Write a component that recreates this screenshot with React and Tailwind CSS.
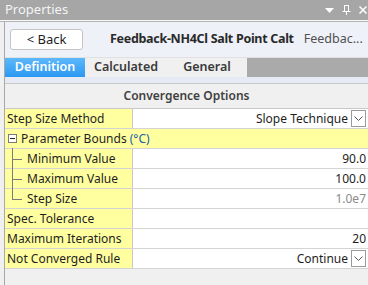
import React from 'react'

const font = { fontFamily: '"Noto Sans", "Open Sans", sans-serif' }

function Dropdown() {
  return (
    <div className="ml-[3px] flex h-[17px] w-[15px] items-center justify-center border border-[#9a9a9a] bg-white">
      <svg width="9" height="6" viewBox="0 0 9 6">
        <path d="M0.5 0.5 L4.5 4.5 L8.5 0.5" fill="none" stroke="#555" strokeWidth="1" />
      </svg>
    </div>
  )
}

function Row({ label, value, child, last, gray, dropdown }) {
  return (
    <div className="flex h-[20px] border-b border-[#d4d4d4] text-[12px]">
      <div className="relative flex w-[128px] shrink-0 items-center border-r border-[#c8c8c8] bg-[#ffffa0] text-[#1e1e1e]">
        {child && (
          <>
            <div className={`absolute left-[7px] top-[-1px] w-px bg-[#7a7a7a] ${last ? 'h-[11px]' : 'h-[21px]'}`} />
            <div className="absolute left-[7px] top-[10px] h-px w-[10px] bg-[#7a7a7a]" />
          </>
        )}
        <span className={child ? 'pl-[22px]' : 'pl-[2px]'}>{label}</span>
      </div>
      <div className={`flex flex-1 items-center justify-end bg-white pr-[2px] ${gray ? 'text-[#8a8a8a]' : 'text-[#1e1e1e]'}`}>
        <span>{value}</span>
        {dropdown && <Dropdown />}
      </div>
    </div>
  )
}

export default function App() {
  return (
    <div className="flex h-[285px] w-[368px] flex-col overflow-hidden bg-[#f0f0f0]" style={font}>
      {/* title bar */}
      <div className="flex h-[20px] shrink-0 items-center justify-between bg-[#a6a6a6] pl-[5px] text-[13px] text-[#f4f4f4]">
        <span>Properties</span>
        <div className="flex items-center gap-[8px] pr-[1px]">
          <svg width="9" height="5" viewBox="0 0 9 5"><path d="M0 0 H9 L4.5 5 Z" fill="#fff" /></svg>
          <svg width="9" height="10" viewBox="0 0 9 10">
            <path d="M2 0.5 H7 M2.5 0.5 V6 M6.5 0.5 V6 M0.5 6.5 H8.5 M4.5 6.5 V10" stroke="#fff" strokeWidth="1" fill="none" />
          </svg>
          <svg width="8" height="8" viewBox="0 0 8 8"><path d="M0.5 0.5 L7.5 7.5 M7.5 0.5 L0.5 7.5" stroke="#fff" strokeWidth="1.5" /></svg>
        </div>
      </div>
      <div className="h-px shrink-0 bg-[#f8f8f8]" />
      <div className="h-px shrink-0 bg-[#b4b4b4]" />

      {/* panel */}
      <div className="ml-[4px] flex flex-1 flex-col border-l border-[#a8a8a8]">
        <div className="flex h-[35px] shrink-0 items-center overflow-hidden whitespace-nowrap bg-[#eef1f8] pl-[5px]">
          <button className="flex h-[21px] w-[73px] shrink-0 items-center justify-center rounded-[3px] border border-[#c4c4c4] bg-white text-[13px] text-[#1e1e1e]">
            &lt; Back
          </button>
          <span className="ml-[27px] shrink-0 text-[12.5px] font-bold tracking-[-0.3px] text-[#2a2a2a]">Feedback-NH4Cl Salt Point Calt</span>
          <span className="ml-[10px] shrink-0 text-[12.5px] text-[#505050]">Feedbac...</span>
        </div>

        {/* tabs */}
        <div className="flex h-[20px] shrink-0 border-t border-[#e0e0e0] text-[12.5px] font-semibold">
          <div className="flex w-[80px] items-center justify-center bg-gradient-to-b from-[#5cb8fa] to-[#2a98f2] text-white">Definition</div>
          <div className="ml-px flex w-[80px] items-center justify-center bg-[#f0f0f0] text-[#3a3a3a]">Calculated</div>
          <div className="ml-px flex w-[80px] items-center justify-center bg-[#f0f0f0] text-[#3a3a3a]">General</div>
          <div className="flex-1 bg-[#aaaaaa]" />
        </div>
        <div className="h-[6px] shrink-0 bg-[#e6eaf4]" />

        {/* grid */}
        <div className="flex h-[26px] shrink-0 items-center justify-center border-y border-[#c8c8c8] bg-[#f0f0f0] text-[12px] font-semibold text-[#404040]">
          Convergence Options
        </div>
        <Row label="Step Size Method" value="Slope Technique" dropdown />
        <div className="flex h-[20px] shrink-0 items-center border-b border-[#d4d4d4] bg-[#ffffa0] text-[12px] text-[#1e1e1e]">
          <div className="ml-[3px] flex h-[9px] w-[9px] items-center justify-center border border-[#7a7a7a] bg-white">
            <div className="h-px w-[5px] bg-[#222]" />
          </div>
          <span className="ml-[4px]">Parameter Bounds <span className="text-[#2060a8]">(°C)</span></span>
        </div>
        <Row child label="Minimum Value" value="90.0" />
        <Row child label="Maximum Value" value="100.0" />
        <Row child last gray label="Step Size" value="1.0e7" />
        <Row label="Spec. Tolerance" value="" />
        <Row label="Maximum Iterations" value="20" />
        <Row label="Not Converged Rule" value="Continue" dropdown />
        <div className="flex-1 bg-[#f0f0f0]" />
      </div>
    </div>
  )
}
